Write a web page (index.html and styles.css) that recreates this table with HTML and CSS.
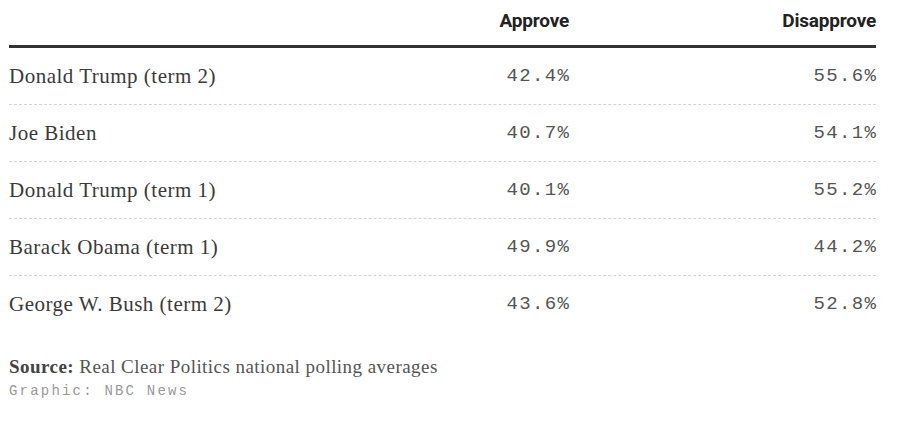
FILE: index.html
```html
<!DOCTYPE html>
<html>
<head>
<meta charset="utf-8">
<link rel="stylesheet" href="styles.css">
</head>
<body>
<div class="chart">
  <div class="table">
    <div class="row head">
      <div class="name"></div>
      <div class="val">Approve</div>
      <div class="val">Disapprove</div>
    </div>
    <div class="row">
      <div class="name">Donald Trump (term 2)</div>
      <div class="val num">42.4%</div>
      <div class="val num">55.6%</div>
    </div>
    <div class="row">
      <div class="name">Joe Biden</div>
      <div class="val num">40.7%</div>
      <div class="val num">54.1%</div>
    </div>
    <div class="row">
      <div class="name">Donald Trump (term 1)</div>
      <div class="val num">40.1%</div>
      <div class="val num">55.2%</div>
    </div>
    <div class="row">
      <div class="name">Barack Obama (term 1)</div>
      <div class="val num">49.9%</div>
      <div class="val num">44.2%</div>
    </div>
    <div class="row">
      <div class="name">George W. Bush (term 2)</div>
      <div class="val num">43.6%</div>
      <div class="val num">52.8%</div>
    </div>
  </div>
  <div class="footer">
    <p class="source"><b>Source:</b> Real Clear Politics national polling averages</p>
    <p class="credit">Graphic: NBC News</p>
  </div>
</div>
</body>
</html>
```
FILE: styles.css
```css
html, body {
  margin: 0;
  padding: 0;
  background: #fff;
}
.chart {
  padding-left: 9px;
  width: 867px;
}
.row {
  display: grid;
  grid-template-columns: 1fr 250px 307px;
  align-items: center;
  height: 57px;
  box-sizing: border-box;
  border-bottom: 1px dashed #d4d4d4;
}
.row:last-child {
  border-bottom: none;
  height: 56px;
}
.row.head {
  height: 48px;
  border-bottom: 3px solid #333;
  align-items: start;
  padding-top: 9px;
}
.head .val {
  font-family: "Roboto", "Liberation Sans", sans-serif;
  font-weight: 700;
  font-size: 19px;
  color: #222;
  letter-spacing: -0.2px;
}
.name {
  font-family: "Liberation Serif", serif;
  font-size: 21px;
  letter-spacing: 0.5px;
  color: #3a3a3a;
}
.val {
  text-align: right;
}
.num {
  font-family: "Liberation Mono", monospace;
  font-size: 19px;
  letter-spacing: 1.4px;
  margin-right: -1.4px;
  color: #555;
}
.footer {
  padding-top: 22px;
}
.source {
  margin: 0;
  font-family: "Liberation Serif", serif;
  font-size: 19px;
  letter-spacing: 0.45px;
  line-height: 25px;
  color: #555;
}
.source b {
  color: #444;
}
.credit {
  margin: 2px 0 0;
  font-family: "Liberation Mono", monospace;
  font-size: 14px;
  letter-spacing: 2.2px;
  line-height: 20px;
  color: #999;
}
```
